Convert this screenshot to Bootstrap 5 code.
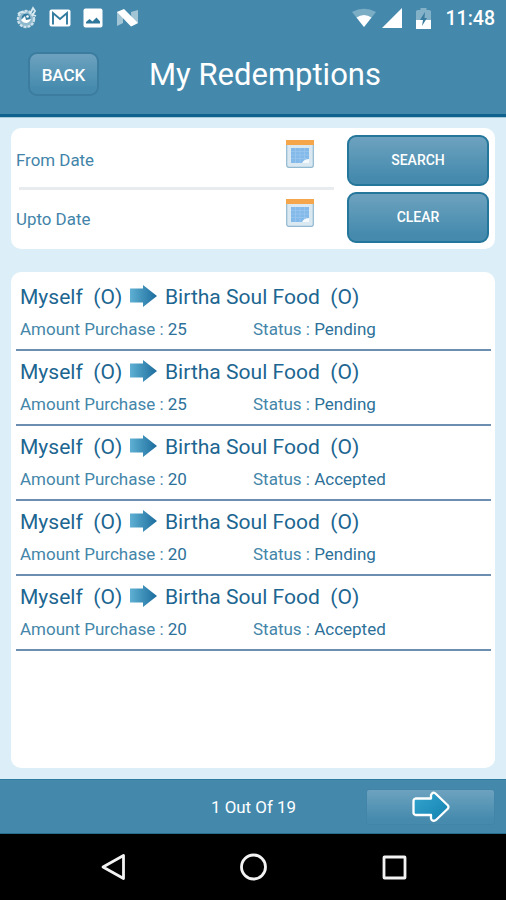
<!DOCTYPE html>
<html lang="en">
<head>
<meta charset="utf-8">
<meta name="viewport" content="width=device-width, initial-scale=1">
<title>My Redemptions</title>
<link href="https://cdn.jsdelivr.net/npm/bootstrap@5.3.0/dist/css/bootstrap.min.css" rel="stylesheet">
<style>
body{font-family:Roboto,sans-serif;background:#dceef7;height:900px;width:506px;overflow:hidden;color:#1c6691}
svg{display:block;flex:none}
.app-head{height:117px;background:#4489ac;border-bottom:3px solid #0f628e;box-shadow:0 1px 0 #a9cadb}
.status-bar{height:36px;padding:0 11px 0 15px}
.clock{font-size:19.5px;font-weight:500;line-height:34px;padding-top:2px;margin-left:15px}
.gmail{margin:0 12px 0 11px}
.nougat{margin-left:13px}
.signal{margin-left:6px}
.battery{margin-left:14px}
.title-bar{height:78px;padding-left:28px}
.glossy,.glossy:hover{background:linear-gradient(#6da2bf,#468bae 85%);color:#fff;font-weight:500}
.back-btn{width:71px;height:44px;border:2px solid #3b7c9f;border-radius:9px;font-size:17px;padding:2px 0 0;line-height:38px;margin-bottom:3px}
.page-title{font-size:31px;font-weight:400;line-height:36px;margin:0 0 0 50px;white-space:nowrap}
.panel{background:#fff;border-radius:10px;margin:0 11px}
.filters{height:121px;margin-top:11px;padding:7px 6px 6px 5px}
.dates{width:331px;font-size:16.9px;color:#4284a9}
.date-row{height:52px}
.date-row span{line-height:20px}
.date-row.from{padding-bottom:3px}
.date-row.upto{height:54px;padding-top:3px}
.date-row .cal{margin:0 33px 12px 0}
.date-row.upto .cal{margin-bottom:11px}
.rule{height:3px;background:#e9ecef;margin:0 13px 0 3px}
.act-btn,.act-btn:hover{width:142px;height:51px;border:2px solid #24769b;border-radius:9px;font-size:14px;padding:0}
.records{height:496px;margin-top:23px;padding:4px 4px 4px 5px}
.record{height:75.1px;border-bottom:2px solid #6c8eb0;padding-left:4px}
.names{height:42px;font-size:21.05px;line-height:42px}
.who{width:110px}
.arrow{margin:0 8px 3px 0}
.details{height:22px;font-size:17px;line-height:22px;color:#4486a9}
.amount{width:233px}
.value{color:#2d7199}
.pager{height:55px;margin-top:11px;background:#4489ac;border-top:1px solid #2d7b9e;border-bottom:1px solid #286d8e;color:#fff;padding:0 11px 0 211px}
.page-no{font-size:16.9px;width:155px;line-height:24px}
.next-btn{width:129px;height:36px;border:1px solid #4186a9;border-radius:3px;padding:0}
.nav-keys{height:66px;background:#000;padding:0 99px 0 100px}
</style>
</head>
<body>
<header class="app-head text-white">
  <div class="status-bar d-flex align-items-center">
    <svg width="23" height="24" viewBox="0 0 23 24"><circle cx="11" cy="13" r="8" fill="#8eb8cd" stroke="#cfe2eb" stroke-width="2.4" stroke-dasharray="3 1"/><path d="M3 8c2-3 6-3 9 1M15 8l3-6 2 3-3 5M18 9l3 1" fill="none" stroke="#d5e7ef" stroke-width="1.8"/><circle cx="11" cy="12" r="4.4" fill="#327b9f"/><path d="M6 14c3 4 8 4 10-1l-5 1-1-4z" fill="#fff"/><circle cx="12.500" cy="10.500" r="1.300" fill="#fff"/></svg>
    <svg class="gmail" width="22" height="18" viewBox="0 0 22 18"><rect x=".5" y=".5" width="21" height="17" rx="2" fill="#fff"/><path d="M4 15.500V4l7 6 7-6v11.500" fill="none" stroke="#327b9f" stroke-width="1.900"/></svg>
    <svg width="20" height="20" viewBox="0 0 20 20"><rect x=".5" y=".5" width="19" height="19" rx="2" fill="#fff"/><path d="M3 15.500v-1.500l3.500-3 3 2.500 4-4 3.500 4v2z" fill="#2f789c"/></svg>
    <svg class="nougat" width="23" height="18" viewBox="0 0 23 18"><path d="M1 3l6-2v13l-6 3zM15 3l7-2v13l-6 3z" fill="#a2c5d6"/><path d="M1 3L8 0l14 14-7 3.500z" fill="#fff"/></svg>
    <div class="d-flex align-items-center ms-auto">
      <svg width="24" height="20" viewBox="0 0 24 20"><path d="M0 4Q12-2.500 24 4L12 19z" fill="#7badc5"/><path d="M4.500 9.600Q12 4.500 19.500 9.600L12 19z" fill="#fff"/></svg>
      <svg class="signal" width="20" height="20" viewBox="0 0 20 20"><path d="M0 20L20 0v20z" fill="#fff"/></svg>
      <svg class="battery" width="15" height="21" viewBox="0 0 15 21"><path d="M0 3.500Q0 2 2 2h2.500V0h6v2H13q2 0 2 1.500V12H0z" fill="#83b1c8"/><path d="M0 12h15v9H0z" fill="#fff"/><path d="M9 4l-5 8h3l-1 6 5-8H8.500z" fill="#397c9f"/></svg>
      <span class="clock">11:48</span>
    </div>
  </div>
  <div class="title-bar d-flex align-items-center">
    <button class="btn glossy back-btn">BACK</button>
    <h1 class="page-title">My Redemptions</h1>
  </div>
</header>

<main>
  <section class="panel filters d-flex">
    <div class="dates">
      <div class="date-row from d-flex align-items-center justify-content-between">
        <span>From Date</span>
        <svg class="cal" width="28" height="28" viewBox="0 0 28 28"><rect x=".7" y=".7" width="26.600" height="26.600" rx="2" fill="#d9e8f1" stroke="#91b9d1" stroke-width="1.200"/><path d="M0 0h28v5H0z" fill="#f5a54a"/><path d="M5 8h18v11l-4 4H5z" fill="#83baea"/><path d="M5 11.500h18M5 15h18M5 18.500h16M9.500 8v15M14 8v15M18.500 8v15" stroke="#a0caf0" stroke-width=".6"/><path d="M23 19v4h-7q2-4 7-4z" fill="#f5f9fc"/></svg>
      </div>
      <div class="rule"></div>
      <div class="date-row upto d-flex align-items-center justify-content-between">
        <span>Upto Date</span>
        <svg class="cal" width="28" height="28" viewBox="0 0 28 28"><rect x=".7" y=".7" width="26.600" height="26.600" rx="2" fill="#d9e8f1" stroke="#91b9d1" stroke-width="1.200"/><path d="M0 0h28v5H0z" fill="#f5a54a"/><path d="M5 8h18v11l-4 4H5z" fill="#83baea"/><path d="M5 11.500h18M5 15h18M5 18.500h16M9.500 8v15M14 8v15M18.500 8v15" stroke="#a0caf0" stroke-width=".6"/><path d="M23 19v4h-7q2-4 7-4z" fill="#f5f9fc"/></svg>
      </div>
    </div>
    <div class="d-flex flex-column justify-content-between">
      <button class="btn glossy act-btn">SEARCH</button>
      <button class="btn glossy act-btn">CLEAR</button>
    </div>
  </section>

  <section class="panel records" id="records"></section>
</main>

<footer>
  <div class="pager d-flex align-items-center">
    <span class="page-no">1 Out Of 19</span>
    <button class="btn glossy next-btn d-flex align-items-center justify-content-center" aria-label="Next">
      <svg width="40" height="32" viewBox="0 0 40 32"><defs><linearGradient id="nx" x2="1" y2="1"><stop stop-color="#35a7d0"/><stop offset="1" stop-color="#1480af"/></linearGradient></defs><path d="M4.500 7.500H20V4q2-4 5-1l12 11.500q1 1.500 0 3L25 29q-4 2-5-1.500v-3.500H4.500q-2-.5-2-2.500V10q0-2 2-2.500z" fill="url(#nx)" stroke="#fff" stroke-width="2.300" stroke-linejoin="round"/></svg>
    </button>
  </div>
  <nav class="nav-keys d-flex align-items-center justify-content-between">
    <svg width="26" height="28" viewBox="0 0 26 28"><path d="M23.500 2.500v23L3 14z" fill="none" stroke="#f3f3f3" stroke-width="2.800" stroke-linejoin="round"/></svg>
    <svg width="28" height="28" viewBox="0 0 28 28"><circle cx="13.500" cy="14" r="12" fill="none" stroke="#f3f3f3" stroke-width="2.800"/></svg>
    <svg width="25" height="25" viewBox="0 0 25 25"><rect x="2" y="2" width="21" height="21" rx=".5" fill="none" stroke="#f3f3f3" stroke-width="2.800"/></svg>
  </nav>
</footer>

<svg width="0" height="0" class="position-absolute"><defs><linearGradient id="ar"><stop stop-color="#5fb0d3"/><stop offset="1" stop-color="#1b6c9c"/></linearGradient></defs></svg>
<script src="https://cdn.jsdelivr.net/npm/bootstrap@5.3.0/dist/js/bootstrap.bundle.min.js"></script>
<script>
const rows=[[25,'Pending'],[25,'Pending'],[20,'Accepted'],[20,'Pending'],[20,'Accepted']];
document.getElementById('records').innerHTML=rows.map(([amount,status])=>`
  <article class="record">
    <div class="names d-flex align-items-center">
      <span class="who">Myself&nbsp; (O)</span>
      <svg class="arrow" width="27" height="22" viewBox="0 0 27 22"><path d="M0 3.500h13V0l14 11-14 11v-4.500H0z" fill="url(#ar)"/></svg>
      <span>Birtha Soul Food&nbsp; (O)</span>
    </div>
    <div class="details d-flex"><span class="amount">Amount Purchase : <span class="value">${amount}</span></span><span>Status : <span class="value">${status}</span></span></div>
  </article>`).join('');
</script>
</body>
</html>
